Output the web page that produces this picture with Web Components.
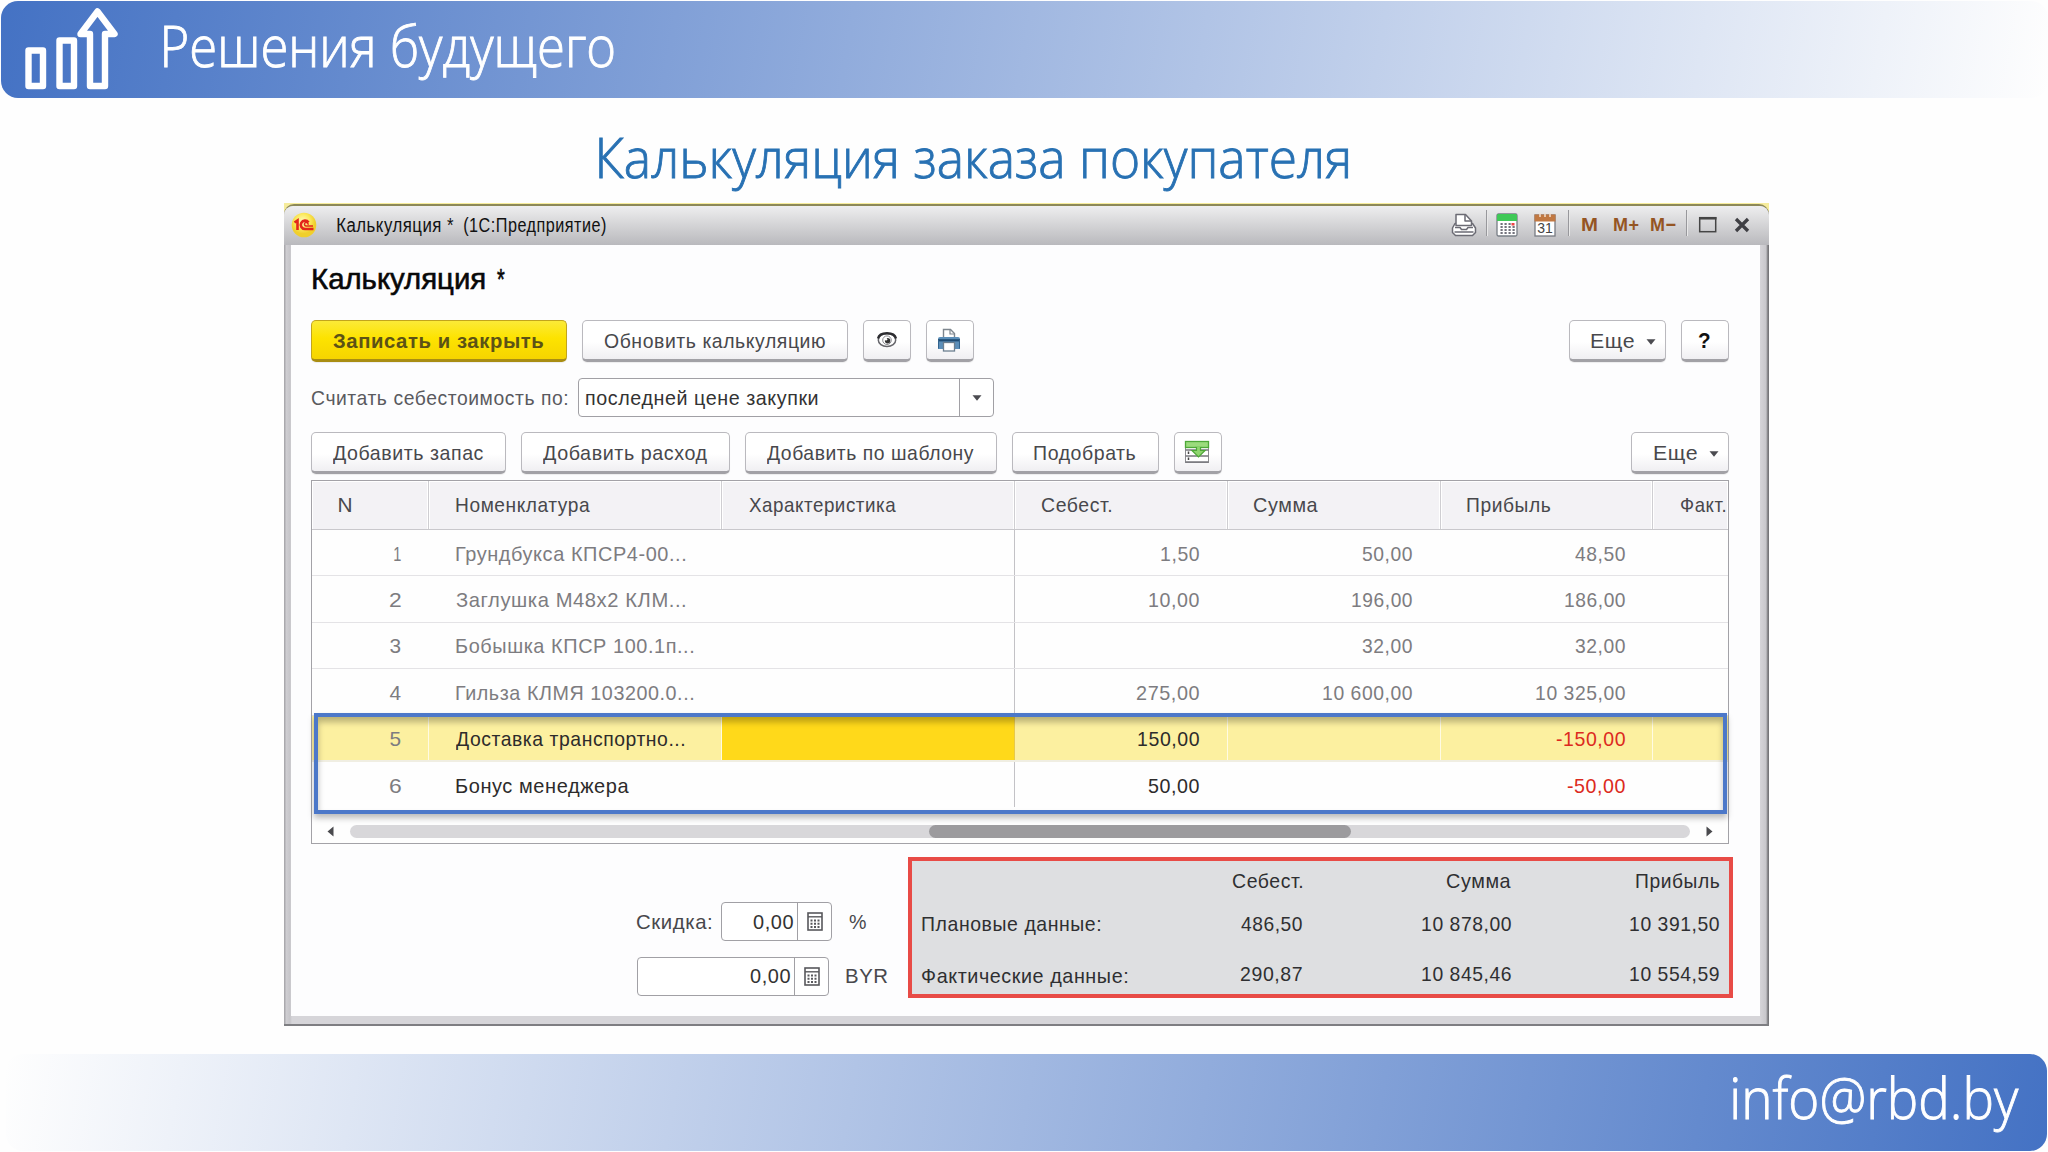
<!DOCTYPE html>
<html lang="ru">
<head>
<meta charset="utf-8">
<title>Калькуляция заказа покупателя</title>
<style>
html,body{margin:0;padding:0}
body{width:2048px;height:1152px;overflow:hidden;background:#fefefe;font-family:"Liberation Sans",Arial,sans-serif}
</style>
</head>
<body>
<calc-slide></calc-slide>
<script>
const define = (name, html, setup) => customElements.define(name, class extends HTMLElement {
  connectedCallback() {
    if (this.shadowRoot) return;
    const t = document.createElement('template');
    t.innerHTML = typeof html === 'function' ? html(this) : html;
    this.attachShadow({mode: 'open'}).appendChild(t.content.cloneNode(true));
    if (setup) setup(this);
  }
});

/* One line of text whose inked width equals the "w" attribute. */
const pen = document.createElement('canvas').getContext('2d');
define('fit-text', `<style>
:host{display:block;flex:none;white-space:pre}
span{display:block;width:max-content;transform-origin:0 50%}
</style><span><slot></slot></span>`, el => {
  const w = +el.getAttribute('w');
  el.style.width = w + 'px';
  const cs = getComputedStyle(el);
  pen.font = `${cs.fontWeight} ${cs.fontSize} ${cs.fontFamily}`;
  pen.letterSpacing = cs.letterSpacing === 'normal' ? '0px' : cs.letterSpacing;
  const m = pen.measureText(el.textContent);
  const left = -m.actualBoundingBoxLeft, k = w / (m.actualBoundingBoxRight - left);
  el.shadowRoot.querySelector('span').style.transform = `translateX(${-left * k}px) scaleX(${k})`;
});

const icons = {
  growth: [94, 84, `<g fill="none" stroke="#fff" stroke-width="6.4" stroke-linejoin="round"><rect x="3.5" y="42.500" width="14.5" height="35.5"/><rect x="34.5" y="32.500" width="14.5" height="45.5"/><path d="M72.5 3.500 L89.500 26 H80 V78 H65 V26 H55.500 Z"/></g>`],
  onec: [26, 26, `<defs><radialGradient id="y" cx=".45" cy=".35"><stop offset="0" stop-color="#fffbc0"/><stop offset=".6" stop-color="#fbe95c"/><stop offset="1" stop-color="#f0cf2c"/></radialGradient></defs><circle cx="13" cy="13" r="12.300" fill="url(#y)"/><g fill="none" stroke="#e3261b" stroke-width="2.600"><path d="M3.500 10.500 L6.500 8.500 V18"/><path d="M17.500 10.500 A4.200 4.200 0 1 0 14 17 H22.500"/><path d="M17 12.700 A1.800 1.800 0 1 0 15 14 H22" stroke-width="1.500"/></g>`],
  print: [26, 24, `<g fill="#fff" stroke="#6b6b74" stroke-width="1.500" stroke-linejoin="round"><path d="M1.500 15 L4 10.500 H21.500 L24.500 15 V19.500 L21.500 22.500 H4.500 L1.500 19.500 Z"/><path d="M5 12.500 V1.500 H14.500 L20.500 8 V12.500 Z"/><path d="M14 2 V8 H20" fill="none"/><path d="M4 14.500 H9 L10.500 16.500 H15.500 L17 14.500 H22 M3.500 19 H22.500" fill="none"/></g>`],
  calc: [22, 24, `<rect x="1" y="1" width="20" height="22" rx="1.500" fill="#fff" stroke="#777d85" stroke-width="1.300"/><path d="M1 2.500 Q1 1 2.500 1 H19.500 Q21 1 21 2.500 V8 H1Z" fill="#3fc957"/><g stroke="#73737c" stroke-width="2" stroke-dasharray="2.200 1.800"><path d="M4.500 11 H15 M4.500 14 H19 M4.500 17 H19 M4.500 20 H19"/></g><rect x="15.500" y="10" width="3" height="2.500" fill="#ee4545"/>`],
  calendar: [22, 24, `<rect x="1" y="2" width="20" height="21" fill="#fff" stroke="#777a82" stroke-width="1.300"/><path d="M.5 1.500 H21.500 V8.500 H.5Z" fill="#c17842"/><path d="M6 0 V4 M11 0 V4 M16 0 V4" stroke="#f3dfcf" stroke-width="1.500"/><text x="11" y="20.300" text-anchor="middle" font-family="Liberation Sans,sans-serif" font-size="14" letter-spacing="0" fill="#444">31</text>`],
  max: [20, 18, `<rect x="1.700" y="1.700" width="16" height="14" fill="none" stroke="#454545" stroke-width="1.500"/><path d="M1 2.300H18.500" stroke="#454545" stroke-width="2.500"/>`],
  close: [16, 16, `<path d="M2 2 L14 14 M14 2 L2 14" stroke="#3f3f44" stroke-width="3.300"/>`],
  eye: [22, 18, `<ellipse cx="11" cy="9" rx="8.700" ry="6.500" fill="#fff" stroke="#66666b" stroke-width="1.500"/><path d="M2 7.500 C3.500 .5 18.500 .5 20 7.500" fill="none" stroke="#2c2c30" stroke-width="2.300"/><circle cx="11" cy="9.200" r="4.300" fill="none" stroke="#8b8b90" stroke-width="1"/><circle cx="11.600" cy="9.800" r="2.700" fill="#333"/><circle cx="10" cy="8.200" r="1.300" fill="#fff"/>`],
  printblue: [24, 24, `<path d="M6.500 10 V1.500 H13.500 L17.500 5.500 V10" fill="#fff" stroke="#7e868e" stroke-width="1.400"/><path d="M13 1.500 V6 H17.500" fill="none" stroke="#7e868e" stroke-width="1.200"/><path d="M3 9 H21 Q23 9 23 11 V21 H1 V11 Q1 9 3 9Z" fill="#5c8fb9"/><path d="M1 12.300 H23" stroke="#1f4c74" stroke-width="2.200"/><path d="M1.500 12V20.500M22.500 12V20.500" stroke="#33648e" stroke-width="1"/><rect x="6.500" y="14.500" width="11" height="8.500" fill="#fff" stroke="#6c7f90" stroke-width="1.300"/>`],
  fill: [26, 24, `<rect x="1.500" y="1.500" width="23" height="21" fill="#fff" stroke="#8c8c90" stroke-width="1"/><path d="M1.500 10 H24.500 M1.500 16 H24.500 M1.500 22 H24.500" stroke="#77777c" stroke-width="1.300"/><path d="M4.500 11.500V14 M4.500 17.500V20" stroke="#444" stroke-width="1.500"/><rect x="1.500" y="1.500" width="23" height="6" fill="#9bdb7c" stroke="#4ea838" stroke-width="1.300"/><path d="M12.500 6.500 H16.500 V10.500 H21 L14.500 17 L8 10.500 H12.500Z" fill="#8fd56f" stroke="#4ea838" stroke-width="1.200"/><path d="M12 6H17" stroke="#9bdb7c" stroke-width="1.500"/>`],
  down: [10, 6, `<path d="M.5 .3 H9.500 L5 5.700Z" fill="#4b4b50"/>`],
  left: [7, 11, `<path d="M6.500 .5 V10.500 L.5 5.500Z" fill="#4a4a4e"/>`],
  right: [7, 11, `<path d="M.5 .5 V10.500 L6.500 5.500Z" fill="#4a4a4e"/>`],
  keypad: [16, 19, `<rect x="1" y="1" width="14" height="17" fill="#fff" stroke="#58585c" stroke-width="1.600"/><path d="M1 4.800H15" stroke="#58585c" stroke-width="1.400"/><g stroke="#58585c" stroke-width="2" stroke-dasharray="2 1.500"><path d="M3.500 8.500H13 M3.500 11.700H13 M3.500 14.900H13"/></g>`]
};
define('ui-icon', el => {
  const [w, h, body] = icons[el.getAttribute('name')];
  return `<style>:host{display:block;flex:none;width:${w}px;height:${h}px}svg{display:block}</style><svg width="${w}" height="${h}" viewBox="0 0 ${w} ${h}">${body}</svg>`;
});

define('ui-button', el => `<style>
:host{display:flex;box-sizing:border-box;flex:none;width:${el.getAttribute('width')}px;height:42px;padding-left:${el.getAttribute('pad') || 0}px;padding-right:1px;
 ${el.hasAttribute('pad') ? '' : 'justify-content:center;'}align-items:center;gap:15px;border:1.500px solid #bab9be;border-bottom:3px solid #a2a1a6;border-radius:5px;
 background:linear-gradient(#fff 55%,#f0eff2);color:#48484c;box-shadow:0 1px 1px #0001}
:host([primary]){background:linear-gradient(#fbea38,#fde300 45%,#f6d400);border-color:#c2a51c;border-bottom-color:#a98d12;color:#5c5216;font-weight:bold;padding-right:3px}
:host([help]){color:#111;font-weight:bold;font-size:22.500px}
::slotted(fit-text){margin-top:2px}
</style><slot></slot>`);

define('ui-field', el => `<style>
:host{display:flex;flex:none;box-sizing:border-box;width:${el.getAttribute('width')}px;height:39px;border:1.500px solid #a1a0a5;border-radius:4px;background:#fff;color:#333}
.v{flex:1;display:flex;align-items:center;padding:0 5px 0 7px}
:host([num]) .v{justify-content:flex-end;padding-right:4px}
.b{width:${el.getAttribute('side')}px;display:flex;align-items:center;justify-content:center;border-left:1.500px solid #a1a0a5}
</style><div class="v"><slot></slot></div><div class="b"><ui-icon name="${el.getAttribute('icon')}"></ui-icon></div>`);

define('slide-banner', el => `<style>
:host{display:flex;box-sizing:border-box;height:97px;border-radius:17px;align-items:center;color:#fff;font:300 57px/78px "Open Sans","Noto Sans",sans-serif;-webkit-text-stroke:.9px #fff}
:host([kind=top]){margin:1px 0 0 1px;padding:0 0 0 24px;gap:45px;background:linear-gradient(100deg,#4472c4,#fefefe 100%)}
:host([kind=bottom]){margin:0 1px 0 6px;justify-content:flex-end;padding:0 28px 11px 0;background:linear-gradient(100deg,#fefefe 0%,#4472c4)}
:host([kind=top]) ::slotted(fit-text){margin-bottom:9px}
</style><slot></slot>`);

define('window-title', `<style>
:host{display:flex;align-items:center;box-sizing:border-box;height:39px;padding:0 18px 1px 7px;border-radius:9px 9px 0 0;background:linear-gradient(#eeeeef,#d6d6d8 45%,#b9b9bd);color:#111;font-size:19.500px;line-height:24px}
.m{color:#955523;font-weight:bold;font-size:19px}
i{width:1px;height:26px;background:#98989c;border-right:1px solid #e8e8e8;flex:none;margin-bottom:5px}
</style><ui-icon name="onec"></ui-icon><fit-text w="117" style="margin-left:20px">Калькуляция *</fit-text><fit-text w="142" style="margin-left:10px">(1С:Предприятие)</fit-text>
<div style="flex:1"></div>
<ui-icon name="print"></ui-icon><i style="margin-left:9px"></i>
<ui-icon name="calc" style="margin-left:8px"></ui-icon><ui-icon name="calendar" style="margin-left:16px"></ui-icon><i style="margin-left:12px"></i>
<fit-text class="m" w="15" style="margin-left:12px">M</fit-text><fit-text class="m" w="25" style="margin-left:17px">M+</fit-text><fit-text class="m" w="25" style="margin-left:12px">M−</fit-text>
<i style="margin-left:10px"></i><ui-icon name="max" style="margin-left:10px"></ui-icon><ui-icon name="close" style="margin:0 1px 0 16px"></ui-icon>`);

const cols = 'grid-template-columns:117px 293px 293px 212.500px 213px 212.500px 1fr';
const rows = [
  ['1', 7, 'Грундбукса КПСР4-00...', 229, '1,50', 38, '50,00', 50, '48,50', 50],
  ['2', 11, 'Заглушка М48х2 КЛМ...', 229, '10,00', 50, '196,00', 60, '186,00', 60],
  ['3', 11, 'Бобышка КПСР 100.1п...', 237, '', 0, '32,00', 50, '32,00', 50],
  ['4', 11, 'Гильза КЛМЯ 103200.0...', 237, '275,00', 62, '10 600,00', 89, '10 325,00', 89],
  ['5', 11, 'Доставка транспортно...', 228, '150,00', 61, '', 0, '-150,00', 69],
  ['6', 11, 'Бонус менеджера', 173, '50,00', 51, '', 0, '-50,00', 58]
];
const ft = (t, w, c = '') => t ? `<fit-text w="${w}" class="${c}">${t}</fit-text>` : '';
define('cost-table', `<style>
:host{display:block;position:relative;box-sizing:border-box;width:1418px;height:364px;border:1.500px solid #a3a2a7;background:#fefefe}
.h,.r{display:grid;${cols}}
.h{height:49px;box-sizing:border-box;background:#f3f2f5;border-bottom:1.500px solid #c9c8cc;color:#48484c}
.h>div{display:flex;align-items:center;padding:0 0 1px 26.500px;border-right:1.500px solid #cfced2;box-shadow:inset -1px 0 #fff,inset 1px 1px #fff}
.h>div:last-child{border:0;padding-left:28px}
.r{height:46.400px;box-sizing:border-box;border-bottom:1.500px solid #e4e3e6;color:#7d7c80}
.r>div{display:flex;align-items:center;justify-content:flex-end;padding:2px 27.500px 0 0;border-right:1.500px solid transparent}
.r>div:nth-child(2){justify-content:flex-start;padding:2px 0 0 27px}
.r>div:nth-child(3){border-right-color:#c3c2c6}
.r>div:last-child{padding:0;border:0}
.r.live{color:#2d2b2b}.r.live>div:first-child{color:#7d7c80}
.neg{color:#dc2a20}
.r.sel{border-bottom:2px solid #f0eee2}
.r.sel>div{background:#fcf0a0;border-right-color:#fffbe3}
.r.sel>div:nth-child(3){background:#ffd91a;border-right-color:#e7c94a}
.r.last{border-bottom-color:transparent}
.s{display:flex;align-items:center;height:13px;margin:17px 15px 0 15px;gap:16px}
.s .track{flex:1;height:13px;border-radius:7px;background:#d8d7da;display:flex}
.thumb{margin-left:579px;width:422px;border-radius:7px;background:#9c9b9e}
.mark{position:absolute;left:1.500px;top:231.500px;width:1413px;height:101px;box-sizing:border-box;border:4.800px solid #4c78c9;box-shadow:0 4px 6px #0004,inset 0 5px 6px #0004}
</style>
<div class="h"><div>${ft('N', 13)}</div><div>${ft('Номенклатура', 134)}</div><div>${ft('Характеристика', 147)}</div><div>${ft('Себест.', 69)}</div><div>${ft('Сумма', 64)}</div><div>${ft('Прибыль', 83)}</div><div>${ft('Факт.', 44)}</div></div>
${rows.map((r, i) => `<div class="r ${i > 3 ? 'live' : ''} ${i === 4 ? 'sel' : ''} ${i === 5 ? 'last' : ''}"><div>${ft(r[0], r[1])}</div><div>${ft(r[2], r[3])}</div><div></div><div>${ft(r[4], r[5])}</div><div>${ft(r[6], r[7])}</div><div>${ft(r[8], r[9], i > 3 ? 'neg' : '')}</div><div></div></div>`).join('')}
<div class="s"><ui-icon name="left"></ui-icon><div class="track"><div class="thumb"></div></div><ui-icon name="right"></ui-icon></div>
<div class="mark"></div>`);

define('totals-panel', `<style>
:host{display:grid;box-sizing:border-box;width:825px;height:141px;border:4.800px solid #e84b46;background:#dedfe1;color:#2f2f31;grid-template-columns:minmax(0,1fr) 182px 209px 208px;
 grid-template-rows:40px 45px 51px;padding:0 10px 0 9.500px;line-height:24px}
div{display:flex;justify-content:flex-end;align-items:center}.l{justify-content:flex-start}.b{padding-top:4px}
</style>
<div></div><div>${ft('Себест.', 69)}</div><div>${ft('Сумма', 64)}</div><div>${ft('Прибыль', 83)}</div>
<div class="l">${ft('Плановые данные:', 178)}</div><div>${ft('486,50', 61)}</div><div>${ft('10 878,00', 89)}</div><div>${ft('10 391,50', 89)}</div>
<div class="l" style="padding-top:8px">${ft('Фактические данные:', 205)}</div><div class="b">${ft('290,87', 61)}</div><div class="b">${ft('10 845,46', 89)}</div><div class="b">${ft('10 554,59', 89)}</div>`);

define('app-window', `<style>
:host{display:block;box-sizing:border-box;width:1485px;height:822px;border-top:2px solid #8c8858;border-radius:10px 10px 0 0;background:linear-gradient(90deg,#aaa9ad 1px,#cfced2 2px,#c6c5c9 6px,#d6d5d9 8px,#d6d5d9 1476px,#c8c7cb 1482px,#77777a 1484px);
 border-bottom:2px solid #7e7e82}
.c{margin:0 9px 0 7px;height:771px;background:#fdfdfe;padding:0 20px;box-sizing:border-box;width:1469px}
</style><window-title></window-title><div class="c"><slot></slot></div>`);

define('calc-slide', `<style>
:host{display:flex;flex-direction:column;width:2048px;height:1152px;font-size:20.800px;line-height:26px;letter-spacing:.6px}
slide-banner{letter-spacing:0}
.title{margin:18px 0 0 599px;height:80px;font:300 56px/80px "Open Sans","Noto Sans",sans-serif;letter-spacing:0;color:#2871b3;-webkit-text-stroke:.9px #2871b3}
.frame{margin:7px 0 0 284px;padding-top:1px;height:850px;background:linear-gradient(#f6ec9c,#f6ec9c) 0 0/1485px 12px no-repeat}
.head{box-sizing:border-box;font-size:30px;line-height:36px;letter-spacing:0;color:#080808;-webkit-text-stroke:.6px #080808;padding-top:16px;height:60px;display:flex;gap:12px}
.row{display:flex;align-items:center;gap:15px}
.sp{flex:1}
.form{gap:11px;margin-top:16px;height:39px;color:#5a5a5e}
.foot{display:flex;margin-top:13px}
.disc{width:597px;box-sizing:border-box;padding:45px 0 0 326px;color:#48484c}
.disc .row{height:39.500px}.disc .row+.row{margin-top:15px}
</style>
<slide-banner kind="top"><ui-icon name="growth"></ui-icon><fit-text w="450">Решения будущего</fit-text></slide-banner>
<fit-text class="title" w="749">Калькуляция заказа покупателя</fit-text>
<div class="frame"><app-window>
 <div class="head"><fit-text w="172" style="margin-left:2px">Калькуляция</fit-text><fit-text w="8">*</fit-text></div>
 <div class="row" style="margin-top:15px;width:1418px">
  <ui-button primary width="256">${ft('Записать и закрыть', 210)}</ui-button>
  <ui-button width="266">${ft('Обновить калькуляцию', 221)}</ui-button>
  <ui-button width="48"><ui-icon name="eye"></ui-icon></ui-button>
  <ui-button width="47.5"><ui-icon name="printblue"></ui-icon></ui-button>
  <div class="sp"></div>
  <ui-button width="97" pad="21">${ft('Еще', 43)}<ui-icon name="down" style="margin:3px 0 0 -3px"></ui-icon></ui-button>
  <ui-button help width="48">${ft('?', 11)}</ui-button>
 </div>
 <div class="row form"><fit-text w="255" style="margin-left:1px">Считать себестоимость по:</fit-text>
  <ui-field width="416" side="33" icon="down">${ft('последней цене закупки', 232)}</ui-field></div>
 <div class="row" style="margin-top:15px;width:1418px">
  <ui-button width="195">${ft('Добавить запас', 150)}</ui-button>
  <ui-button width="209">${ft('Добавить расход', 164)}</ui-button>
  <ui-button width="252">${ft('Добавить по шаблону', 207)}</ui-button>
  <ui-button width="146.5">${ft('Подобрать', 101)}</ui-button>
  <ui-button width="48"><ui-icon name="fill"></ui-icon></ui-button>
  <div class="sp"></div>
  <ui-button width="98" pad="22">${ft('Еще', 43)}<ui-icon name="down" style="margin:3px 0 0 -3px"></ui-icon></ui-button>
 </div>
 <cost-table style="margin-top:6px"></cost-table>
 <div class="foot">
  <div class="disc">
   <div class="row" style="gap:10px">${ft('Скидка:', 74)}<ui-field num width="111" side="33" icon="keypad">${ft('0,00', 40)}</ui-field><fit-text w="17" style="margin-left:7px">%</fit-text></div>
   <div class="row"><ui-field num width="192" side="33" icon="keypad">${ft('0,00', 40)}</ui-field><fit-text w="42" style="margin-left:2px">BYR</fit-text></div>
  </div>
  <totals-panel></totals-panel>
 </div>
</app-window></div>
<slide-banner kind="bottom"><fit-text w="286">info@rbd.by</fit-text></slide-banner>`);
</script>
</body>
</html>
